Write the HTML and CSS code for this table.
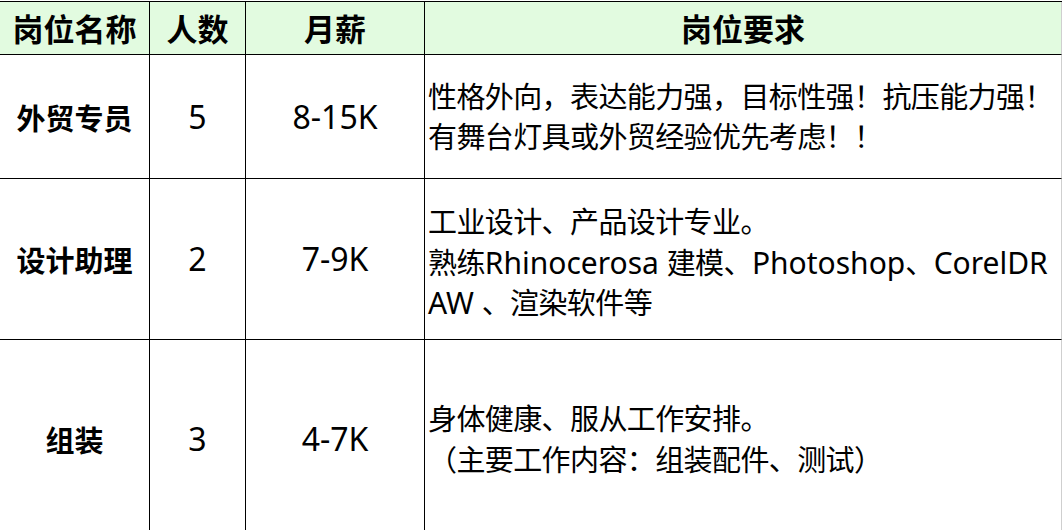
FILE: index.html
```html
<!DOCTYPE html>
<html lang="zh-CN">
<head>
<meta charset="utf-8">
<title>岗位招聘</title>
<link rel="stylesheet" href="styles.css">
</head>
<body>
<div class="sheet">
  <div class="cell head">岗位名称</div>
  <div class="cell head">人数</div>
  <div class="cell head">月薪</div>
  <div class="cell head last">岗位要求</div>

  <div class="cell name r1">外贸专员</div>
  <div class="cell num r1">5</div>
  <div class="cell num r1">8-15K</div>
  <div class="cell req r1 last">
    <div class="line">性格外向，表达能力强，目标性强！抗压能力强！</div>
    <div class="line">有舞台灯具或外贸经验优先考虑！！</div>
  </div>

  <div class="cell name r2">设计助理</div>
  <div class="cell num r2">2</div>
  <div class="cell num r2">7-9K</div>
  <div class="cell req r2 last">
    <div class="line first">工业设计、产品设计专业。</div>
    <div class="line">熟练<span class="lat">Rhinocerosa </span>建模、<span class="lat">Photoshop</span>、<span class="lat">CorelDR</span></div>
    <div class="line"><span class="lat">AW </span>、渲染软件等</div>
  </div>

  <div class="cell name r3">组装</div>
  <div class="cell num r3">3</div>
  <div class="cell num r3">4-7K</div>
  <div class="cell req r3 last">
    <div class="line first">身体健康、服从工作安排。</div>
    <div class="line">（主要工作内容：组装配件、测试）</div>
  </div>
</div>
</body>
</html>
```

FILE: styles.css
```css
html, body {
  margin: 0;
  padding: 0;
  background: #ffffff;
  overflow: hidden;
}

body {
  width: 1063px;
  height: 530px;
  font-family: "Noto Sans", "Noto Sans CJK SC", sans-serif;
  color: #000000;
}

.sheet {
  margin-top: 1px;
  display: grid;
  grid-template-columns: 150px 96px 179px 637px;
  grid-template-rows: 53px 124px 161px 198px;
  border-top: 1px solid #000000;
  width: 1062px;
}

.cell {
  box-sizing: border-box;
  border-right: 1px solid #000000;
  border-bottom: 1px solid #000000;
  display: flex;
  align-items: center;
  justify-content: center;
  white-space: nowrap;
}

.cell.last {
  border-right-color: #cfcfcf;
}

.head {
  background: #e2fbe0;
  font-family: "Noto Sans CJK SC", sans-serif;
  font-weight: 700;
  font-size: 31px;
  line-height: 36px;
}

.name {
  font-family: "Noto Sans CJK SC", sans-serif;
  font-weight: 700;
  font-size: 29px;
  line-height: 34px;
}

.num {
  font-family: "Noto Sans", sans-serif;
  font-size: 32px;
  line-height: 40px;
}

.req {
  flex-direction: column;
  align-items: flex-start;
  justify-content: center;
  padding-left: 3px;
  font-size: 29px;
  letter-spacing: -0.6px;
}

.line {
  line-height: 40px;
  height: 40px;
}

.line.first {
  height: 43px;
  line-height: 43px;
}

.r2.req {
  padding-top: 4px;
}

.lat {
  font-size: 30px;
  letter-spacing: 0;
}
```
